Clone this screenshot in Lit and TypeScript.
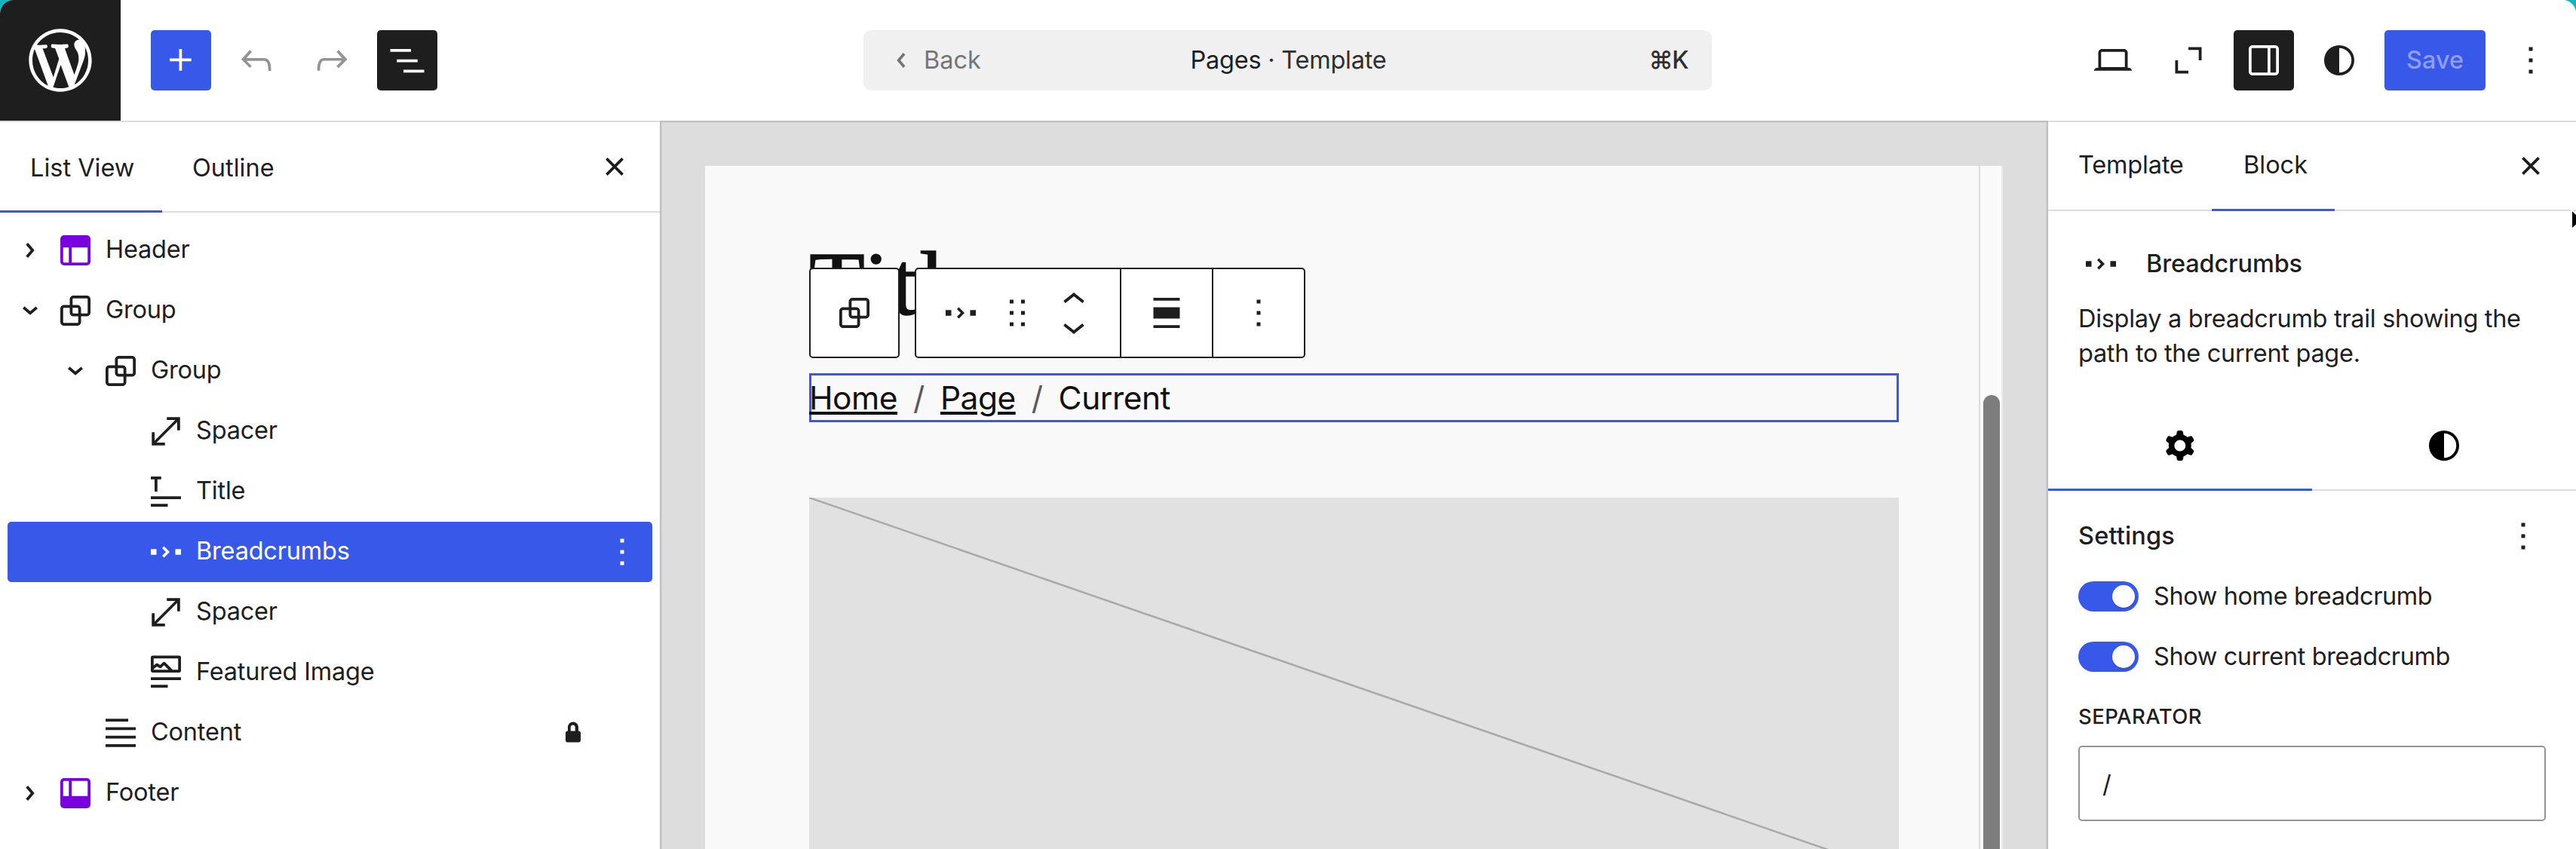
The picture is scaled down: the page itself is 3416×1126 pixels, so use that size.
import { LitElement, html, css, svg, nothing } from "lit";
import { customElement, property } from "lit/decorators.js";

const ICONS: Record<string, string> = {
  plus: "M11 12.5V17.5H12.5V12.5H17.5V11H12.5V6H11V11H6V12.5H11Z",
  undo: "M18.3 11.7c-.6-.6-1.4-.9-2.3-.9H6.7l2.9-3.3-1.1-1-4.5 5L8.5 16l1-1-2.7-2.7H16c.5 0 .9.2 1.3.5 1 1 1 3.4 1 4.5v.3h1.5v-.2c0-1.5 0-4.3-1.5-5.7z",
  redo: "M15.6 6.5l-1.1 1 2.9 3.3H8c-.9 0-1.7.3-2.3.9-1.4 1.5-1.4 4.2-1.4 5.6v.2h1.5v-.3c0-1.1 0-3.5 1-4.5.3-.3.7-.5 1.3-.5h9.2L14.5 15l1.1 1.1 4.6-4.6-4.6-5z",
  listView: "M3 6h11v1.5H3V6Zm3.5 5.5h11V13h-11v-1.5ZM21 17H10v1.5h11V17Z",
  close: "M12 13.06l3.712 3.713 1.061-1.06L13.061 12l3.712-3.712-1.06-1.06L12 10.938 8.288 7.227l-1.061 1.06L10.939 12l-3.712 3.712 1.06 1.061L12 13.061z",
  chevronRightSmall: "M10.862 8.04l3.419 3.989-3.419 3.988-1.139-.976 2.582-3.012-2.582-3.012 1.139-.976Z",
  chevronDownSmall: "m15.99 10.889-3.988 3.418-3.988-3.418.976-1.14 3.012 2.582 3.012-2.581.976 1.139Z",
  chevronLeftSmall: "m13.1 16-3.4-4 3.4-4 1.1 1-2.6 3 2.6 3-1.1 1z",
  chevronUp: "M6.5 12.4L12 8l5.5 4.4-.9 1.2L12 10l-4.5 3.6-1-1.2z",
  chevronDown: "M17.5 11.6L12 16l-5.5-4.4.9-1.2L12 14l4.5-3.6 1 1.2z",
  header: "M18.5 10.5H10v8h8a.5.5 0 00.5-.5v-7.5zm-10 0h-3V18a.5.5 0 00.5.5h2.5v-8zM6 4h12a2 2 0 012 2v12a2 2 0 01-2 2H6a2 2 0 01-2-2V6a2 2 0 012-2z",
  footer: "M18 5.5h-8v8h8.5V6a.5.5 0 00-.5-.5zm-9.5 8h-3V6a.5.5 0 01.5-.5h2.5v8zM6 4h12a2 2 0 012 2v12a2 2 0 01-2 2H6a2 2 0 01-2-2V6a2 2 0 012-2z",
  group: "M18 4h-7c-1.1 0-2 .9-2 2v3H6c-1.1 0-2 .9-2 2v7c0 1.1.9 2 2 2h7c1.1 0 2-.9 2-2v-3h3c1.1 0 2-.9 2-2V6c0-1.1-.9-2-2-2zm-4.5 14c0 .3-.2.5-.5.5H6c-.3 0-.5-.2-.5-.5v-7c0-.3.2-.5.5-.5h3V13c0 1.1.9 2 2 2h2.5v3zm0-4.5H11c-.3 0-.5-.2-.5-.5v-2.5H13c.3 0 .5.2.5.5v2.5zm5-.5c0 .3-.2.5-.5.5h-3V11c0-1.1-.9-2-2-2h-2.5V6c0-.3.2-.5.5-.5h7c.3 0 .5.2.5.5v7z",
  spacer: "M7 18h4.5v1.5h-7v-7H6V17L17 6h-4.5V4.5h7v7H18V7L7 18Z",
  title: "m4 5.5h2v6.5h1.5v-6.5h2v-1.5h-5.5zm16 10.5h-16v-1.5h16zm-7 4h-9v-1.5h9z",
  breadcrumbs: "M4 13.5h3v-3H4v3Zm6-3.5 2 2-2 2 1 1 3-3-3-3-1 1Zm7 .5v3h3v-3h-3Z",
  featuredImage: "M19 3H5c-.6 0-1 .4-1 1v7c0 .5.4 1 1 1h14c.5 0 1-.4 1-1V4c0-.6-.4-1-1-1zM5.5 10.5v-.4l1.8-1.3 1.3.8c.3.2.7.2.9-.1L11 8.1l2.4 2.4H5.5zm13 0h-2.9l-4-4c-.3-.3-.8-.3-1.1 0L8.9 8l-1.2-.8c-.3-.2-.6-.2-.9 0l-1.3 1V4.5h13v6zM4 20h9v-1.5H4V20zm0-4h16v-1.5H4V16z",
  content: "M4 4.5h12V6H4zM4 9h16v1.5H4zM4 13.5h16V15H4zM4 18h16v1.5H4z",
  lock: "M15 11h-.2V9c0-1.5-1.2-2.8-2.8-2.8S9.2 7.5 9.2 9v2H9c-.6 0-1 .4-1 1v4c0 .6.4 1 1 1h6c.6 0 1-.4 1-1v-4c0-.6-.4-1-1-1zm-1.8 0h-2.5V9c0-.7.6-1.2 1.2-1.2s1.2.6 1.2 1.2v2z",
  more: "M13 19h-2v-2h2v2zm0-6h-2v-2h2v2zm0-6h-2V5h2v2z",
  desktop: "M20.5 16h-.7V8c0-1.1-.9-2-2-2H6.2c-1.1 0-2 .9-2 2v8h-.7c-.8 0-1.5.7-1.5 1.5h20c0-.8-.7-1.5-1.5-1.5zM5.7 8c0-.3.2-.5.5-.5h11.6c.3 0 .5.2.5.5v7.6H5.7V8z",
  zoomOut: "M12 5h7v7h-1.5V6.5H12V5ZM5 12h1.5v5.5H12V19H5v-7Z",
  drawer: "M18 4H6c-1.1 0-2 .9-2 2v12c0 1.1.9 2 2 2h12c1.1 0 2-.9 2-2V6c0-1.1-.9-2-2-2zm-4 14.5H6c-.3 0-.5-.2-.5-.5V6c0-.3.2-.5.5-.5h8v13zm4.5-.5c0 .3-.2.5-.5.5h-2.5v-13H18c.3 0 .5.2.5.5v12z",
  styles: "M20 12a8 8 0 1 1-16 0 8 8 0 0 1 16 0Zm-1.5 0a6.5 6.5 0 0 1-6.5 6.5v-13a6.5 6.5 0 0 1 6.5 6.5Z",
  cog: "M10.289 4.836A1 1 0 0111.275 4h1.306a1 1 0 01.987.836l.244 1.466c.787.26 1.503.679 2.108 1.218l1.393-.522a1 1 0 011.216.437l.653 1.13a1 1 0 01-.23 1.273l-1.148.944a6.025 6.025 0 010 2.435l1.149.946a1 1 0 01.23 1.272l-.653 1.13a1 1 0 01-1.216.437l-1.394-.522c-.605.54-1.32.958-2.108 1.218l-.244 1.466a1 1 0 01-.987.836h-1.306a1 1 0 01-.986-.836l-.244-1.466a5.995 5.995 0 01-2.108-1.218l-1.394.522a1 1 0 01-1.217-.436l-.653-1.131a1 1 0 01.23-1.272l1.149-.946a6.026 6.026 0 010-2.435l-1.148-.944a1 1 0 01-.23-1.272l.653-1.131a1 1 0 011.217-.437l1.393.522a5.994 5.994 0 012.108-1.218l.244-1.466zM14.929 12a3 3 0 11-6 0 3 3 0 016 0z",
  drag: "M8 7h2V5H8v2zm0 6h2v-2H8v2zm0 6h2v-2H8v2zm6-14v2h2V5h-2zm0 8h2v-2h-2v2zm0 6h2v-2h-2v2z",
  align: "M19 5.5H5V4h14v1.5ZM19 20H5v-1.5h14V20ZM5 9h14v6H5V9Z",
  wordpress: "M20 10c0-5.51-4.49-10-10-10C4.48 0 0 4.49 0 10c0 5.52 4.48 10 10 10 5.51 0 10-4.48 10-10zM7.78 15.37L4.37 6.22c.55-.02 1.17-.08 1.17-.08.5-.06.44-1.13-.06-1.11 0 0-1.45.11-2.37.11-.18 0-.37 0-.58-.01C4.12 2.69 6.87 1.11 10 1.11c2.33 0 4.45.87 6.05 2.34-.68-.11-1.65.39-1.65 1.58 0 .74.45 1.36.9 2.1.35.61.55 1.36.55 2.46 0 1.49-1.4 5-1.4 5l-3.03-8.37c.54-.02.82-.17.82-.17.5-.05.44-1.25-.06-1.22 0 0-1.44.12-2.38.12-.87 0-2.33-.12-2.33-.12-.5-.03-.56 1.2-.06 1.22l.92.08 1.26 3.41zM17.41 10c.24-.64.74-1.87.43-4.25.7 1.29 1.05 2.71 1.05 4.25 0 3.29-1.73 6.24-4.4 7.78.97-2.59 1.94-5.2 2.92-7.78zM6.1 18.09C3.12 16.65 1.11 13.53 1.11 10c0-1.3.23-2.48.72-3.59C3.25 10.3 4.67 14.2 6.1 18.09zm4.03-6.63l2.58 6.98c-.86.29-1.76.45-2.71.45-.79 0-1.57-.11-2.29-.33.81-2.38 1.62-4.74 2.42-7.1z",
};

@customElement("wp-icon")
class WpIcon extends LitElement {
  @property() name = "";
  @property() box = "0 0 24 24";
  static styles = css`
    :host { display: block; width: 60px; height: 60px; flex: none; }
    svg { display: block; width: 100%; height: 100%; fill: currentColor; }
  `;
  render() {
    return html`<svg viewBox=${this.box}>${svg`<path fill-rule="evenodd" d=${ICONS[this.name] ?? ""}></path>`}</svg>`;
  }
}

@customElement("editor-header")
class EditorHeader extends LitElement {
  static styles = css`
    :host {
      display: flex; height: 160px; box-sizing: content-box;
      border-bottom: 2px solid #ddd; position: relative; background: #fff;
    }
    .site { width: 160px; height: 160px; background: #1e1e1e; color: #fff; display: grid; place-items: center; }
    .logo { width: 100px; height: 100px; }
    .tools { display: flex; gap: 20px; padding-left: 40px; align-items: center; }
    .btn { width: 80px; height: 80px; border-radius: 5px; display: grid; place-items: center; color: #1e1e1e; }
    .primary { background: #3858e9; color: #fff; }
    .pressed { background: #1e1e1e; color: #fff; }
    .off { color: #949494; }
    .bar {
      width: 1125px; height: 80px; box-sizing: border-box; border-radius: 10px; background: #f0f0f0;
      display: grid; grid-template-columns: 1fr auto 1fr; align-items: center; padding: 0 32px 0 20px;
      margin: 40px 0 0 565px;
    }
    .back { display: flex; align-items: center; color: #757575; }
    .doc { color: #1e1e1e; margin-right: -14px; letter-spacing: -0.25px; }
    .kind { color: #2f2f2f; }
    .keys { justify-self: end; color: #2f2f2f; font-weight: 500; letter-spacing: -1.5px; }
    .right { margin-left: auto; display: flex; gap: 20px; align-items: center; padding-right: 20px; }
    .save {
      height: 80px; width: 134px; border-radius: 5px; background: #3858e9; color: #8e9ff3;
      display: grid; place-items: center; font-weight: 500;
    }
  `;
  render() {
    return html`
      <div class="site"><wp-icon class="logo" name="wordpress" box="-2 -2 24 24"></wp-icon></div>
      <div class="tools">
        <div class="btn primary"><wp-icon name="plus"></wp-icon></div>
        <div class="btn off"><wp-icon name="undo"></wp-icon></div>
        <div class="btn off"><wp-icon name="redo"></wp-icon></div>
        <div class="btn pressed"><wp-icon name="listView"></wp-icon></div>
      </div>
      <div class="bar">
        <div class="back"><wp-icon name="chevronLeftSmall"></wp-icon>Back</div>
        <div class="doc">Pages <span class="kind">· Template</span></div>
        <div class="keys">⌘K</div>
      </div>
      <div class="right">
        <div class="btn"><wp-icon name="desktop"></wp-icon></div>
        <div class="btn"><wp-icon name="zoomOut"></wp-icon></div>
        <div class="btn pressed"><wp-icon name="drawer"></wp-icon></div>
        <div class="btn"><wp-icon name="styles"></wp-icon></div>
        <div class="save">Save</div>
        <div class="btn"><wp-icon name="more"></wp-icon></div>
      </div>
    `;
  }
}

interface Row {
  label: string;
  icon: string;
  level: number;
  state?: "open" | "closed";
  part?: boolean;
  selected?: boolean;
  locked?: boolean;
}

const ROWS: Row[] = [
  { label: "Header", icon: "header", level: 0, state: "closed", part: true },
  { label: "Group", icon: "group", level: 0, state: "open" },
  { label: "Group", icon: "group", level: 1, state: "open" },
  { label: "Spacer", icon: "spacer", level: 2 },
  { label: "Title", icon: "title", level: 2 },
  { label: "Breadcrumbs", icon: "breadcrumbs", level: 2, selected: true },
  { label: "Spacer", icon: "spacer", level: 2 },
  { label: "Featured Image", icon: "featuredImage", level: 2 },
  { label: "Content", icon: "content", level: 1, locked: true },
  { label: "Footer", icon: "footer", level: 0, state: "closed", part: true },
];

@customElement("list-view")
class ListView extends LitElement {
  static styles = css`
    :host { display: block; width: 875px; flex: none; background: #fff; }
    .tabs { display: flex; height: 120px; box-sizing: border-box; border-bottom: 2px solid #ddd; align-items: center; padding-right: 30px; }
    .tab { height: 120px; margin-bottom: -2px; box-sizing: border-box; padding: 1px 40px 0; display: flex; align-items: center; white-space: nowrap; }
    .active { box-shadow: inset 0 -3px #3858e9; width: 215px; padding-right: 0; }
    .close { margin-left: auto; }
    .rows { padding: 10px 10px 0; letter-spacing: -0.2px; }
    .row { display: flex; align-items: center; height: 80px; border-radius: 5px; color: #1e1e1e; }
    .indent { width: calc(60px * var(--level, 0)); flex: none; }
    .toggle { width: 60px; height: 60px; flex: none; }
    .icon { margin-right: 10px; }
    .name { padding-bottom: 2px; }
    .part { color: #7a00df; }
    .selected { background: #3858e9; color: #fff; }
    .end { margin-left: auto; }
    .more { margin-right: 10px; }
    .lock { margin-right: 75px; }
  `;
  private row(r: Row) {
    return html`
      <div class="row ${r.selected ? "selected" : ""}">
        <span class="indent" style="--level:${r.level}"></span>
        <span class="toggle">
          ${r.state ? html`<wp-icon name=${r.state === "open" ? "chevronDownSmall" : "chevronRightSmall"}></wp-icon>` : nothing}
        </span>
        <wp-icon class="icon ${r.part ? "part" : ""}" name=${r.icon}></wp-icon>
        <span class="name">${r.label}</span>
        ${r.locked ? html`<wp-icon class="end lock" name="lock"></wp-icon>` : nothing}
        ${r.selected ? html`<wp-icon class="end more" name="more"></wp-icon>` : nothing}
      </div>
    `;
  }
  render() {
    return html`
      <div class="tabs">
        <div class="tab active">List View</div>
        <div class="tab">Outline</div>
        <wp-icon class="close" name="close"></wp-icon>
      </div>
      <div class="rows">${ROWS.map((r) => this.row(r))}</div>
    `;
  }
}

@customElement("editor-canvas")
class EditorCanvas extends LitElement {
  static styles = css`
    :host { display: block; flex: 1; min-width: 0; background: #ddd; box-sizing: border-box; padding: 58px 60px 0; position: relative; }
    :host::after {
      content: ""; position: absolute; inset: -2px 0 -10px 0; border: 2px solid #c0c0c0;
      box-shadow: inset 0 0 0 1px #d2d2d2; pointer-events: none;
    }
    .frame { display: flex; height: 906px; overflow: hidden; }
    .page { flex: 1; background: #f9f9f9; padding: 0 106px 0 138px; position: relative; }
    .track { width: 24px; border-left: 2px solid #ddd; border-right: 2px solid #ebebeb; background: #fafafa; padding: 304px 0 0 4px; }
    .thumb { width: 22px; height: 700px; border-radius: 11px; background: #7d7d7d; }
    .title {
      margin: 0; height: 275px; padding-top: 89px; box-sizing: border-box; font: 400 121px/134px "Liberation Serif", serif;
      letter-spacing: 3px; color: #111; -webkit-text-stroke: 1.5px #111;
    }
    .crumbs {
      height: 65px; box-sizing: border-box; border: 3px solid #3858e9; display: flex; align-items: center;
      font-size: 42.5px; letter-spacing: -0.5px; color: #111; white-space: pre;
    }
    .link { text-decoration: underline; text-decoration-thickness: 4px; text-underline-offset: 3px; }
    .home { margin-left: -3px; }
    .sep { color: #5a5a5a; padding: 0 21px; }
    .image { margin-top: 100px; height: 600px; background: #e1e1e1; display: block; width: 100%; }
    .toolbars { position: absolute; left: 138px; top: 135px; display: flex; gap: 20px; }
    .bar { height: 120px; box-sizing: border-box; border: 2px solid #1e1e1e; border-radius: 5px; background: #fff; display: flex; color: #1e1e1e; }
    .parent { width: 120px; display: grid; place-items: center; }
    .seg { display: flex; align-items: center; justify-content: center; box-sizing: border-box; }
    .seg + .seg { border-left: 2px solid #1e1e1e; width: 122px; }
    .first { width: 270px; justify-content: flex-start; padding-left: 29px; gap: 15px; }
    .movers { display: flex; flex-direction: column; }
    .mover { height: 35px; }
    .mover wp-icon { margin-top: -12.5px; }
  `;
  render() {
    return html`
      <div class="frame">
        <div class="page">
          <h1 class="title">Title</h1>
          <div class="crumbs"><span class="link home">Home</span><span class="sep">/</span><span class="link">Page</span><span class="sep">/</span><span>Current</span></div>
          <svg class="image" viewBox="0 0 1445 600" preserveAspectRatio="none">
            <line x1="0" y1="0" x2="1445" y2="499.4" stroke="#a9a9a9" stroke-width="2.5"></line>
          </svg>
          <div class="toolbars">
            <div class="bar parent"><wp-icon name="group"></wp-icon></div>
            <div class="bar">
              <div class="seg first">
                <wp-icon name="breadcrumbs"></wp-icon>
                <wp-icon name="drag"></wp-icon>
                <div class="movers">
                  <div class="mover"><wp-icon name="chevronUp"></wp-icon></div>
                  <div class="mover"><wp-icon name="chevronDown"></wp-icon></div>
                </div>
              </div>
              <div class="seg"><wp-icon name="align"></wp-icon></div>
              <div class="seg"><wp-icon name="more"></wp-icon></div>
            </div>
          </div>
        </div>
        <div class="track"><div class="thumb"></div></div>
      </div>
    `;
  }
}

@customElement("block-inspector")
class BlockInspector extends LitElement {
  static styles = css`
    :host { display: block; width: 700px; flex: none; background: #fff; }
    .tabs { display: flex; height: 118px; box-sizing: border-box; border-bottom: 2px solid #ddd; align-items: center; padding-right: 30px; }
    .tab { height: 118px; margin-bottom: -2px; box-sizing: border-box; padding: 0 40px 4px; display: flex; align-items: center; }
    .active { box-shadow: inset 0 -3px #3858e9; padding: 0 38px 4px 42px; width: 163px; }
    .template { width: 217px; letter-spacing: -0.2px; }
    .close { margin-left: auto; }
    .card { padding: 40px 40px 0; height: 250px; box-sizing: border-box; }
    .name { display: flex; align-items: center; gap: 30px; height: 60px; font-weight: 500; letter-spacing: -0.15px; }
    .desc { margin: 20px 0 0; line-height: 46px; white-space: nowrap; letter-spacing: -0.3px; }
    .modes { display: grid; grid-template-columns: 1fr 1fr; height: 121px; box-sizing: border-box; border-bottom: 2px solid #ddd; color: #000; }
    .mode { height: 121px; display: grid; place-items: center; }
    .on { box-shadow: inset 0 -3px #3858e9; }
    .panel { padding: 29px 40px 0; }
    .head { display: flex; justify-content: space-between; align-items: center; height: 62px; font-weight: 500; letter-spacing: 0.15px; }
    .toggles { padding-top: 29px; display: flex; flex-direction: column; gap: 40px; letter-spacing: -0.4px; }
    .toggle { display: flex; align-items: center; height: 40px; gap: 20px; }
    .switch { width: 80px; height: 40px; border-radius: 20px; background: #3858e9; display: flex; align-items: center; justify-content: flex-end; padding-right: 5px; box-sizing: border-box; }
    .knob { width: 30px; height: 30px; border-radius: 50%; background: #fff; box-shadow: 0 2px 2px rgba(0,0,0,.12); }
    .label { margin-top: 41px; font-size: 27.5px; font-weight: 500; line-height: 36px; height: 36px; letter-spacing: 0.4px; }
    .field { margin-top: 21px; height: 100px; width: 620px; box-sizing: border-box; border: 2px solid #949494; border-radius: 5px; padding: 4px 30px 0; display: flex; align-items: center; }
  `;
  render() {
    return html`
      <div class="tabs">
        <div class="tab template">Template</div>
        <div class="tab active">Block</div>
        <wp-icon class="close" name="close"></wp-icon>
      </div>
      <div class="card">
        <div class="name"><wp-icon name="breadcrumbs"></wp-icon>Breadcrumbs</div>
        <p class="desc">Display a breadcrumb trail showing the<br />path to the current page.</p>
      </div>
      <div class="modes">
        <div class="mode on"><wp-icon name="cog"></wp-icon></div>
        <div class="mode"><wp-icon name="styles"></wp-icon></div>
      </div>
      <div class="panel">
        <div class="head"><span>Settings</span><wp-icon name="more"></wp-icon></div>
        <div class="toggles">
          <div class="toggle"><span class="switch"><span class="knob"></span></span>Show home breadcrumb</div>
          <div class="toggle"><span class="switch"><span class="knob"></span></span>Show current breadcrumb</div>
        </div>
        <div class="label">SEPARATOR</div>
        <div class="field">/</div>
      </div>
    `;
  }
}

@customElement("app-root")
class AppRoot extends LitElement {
  static styles = css`
    :host { display: block; position: relative; width: 3416px; height: 1126px; overflow: hidden; background: #0fb5c1; font: 400 32.5px/40px Inter, "Liberation Sans", sans-serif; color: #1e1e1e; }
    .window { height: 1126px; display: flex; flex-direction: column; border-radius: 18px 18px 0 0; overflow: hidden; background: #fff; }
    .body { display: flex; flex: 1; min-height: 0; }
    .cursor { position: absolute; left: 3406px; top: 272px; width: 30px; height: 44px; }
  `;
  render() {
    return html`
      <div class="window">
        <editor-header></editor-header>
        <div class="body">
          <list-view></list-view>
          <editor-canvas></editor-canvas>
          <block-inspector></block-inspector>
        </div>
      </div>
      <svg class="cursor" viewBox="0 0 30 44"><path d="M4 6v26l6-5 5 11 5-2-5-11h9z" fill="#000" stroke="#fff" stroke-width="2"></path></svg>
    `;
  }
}
